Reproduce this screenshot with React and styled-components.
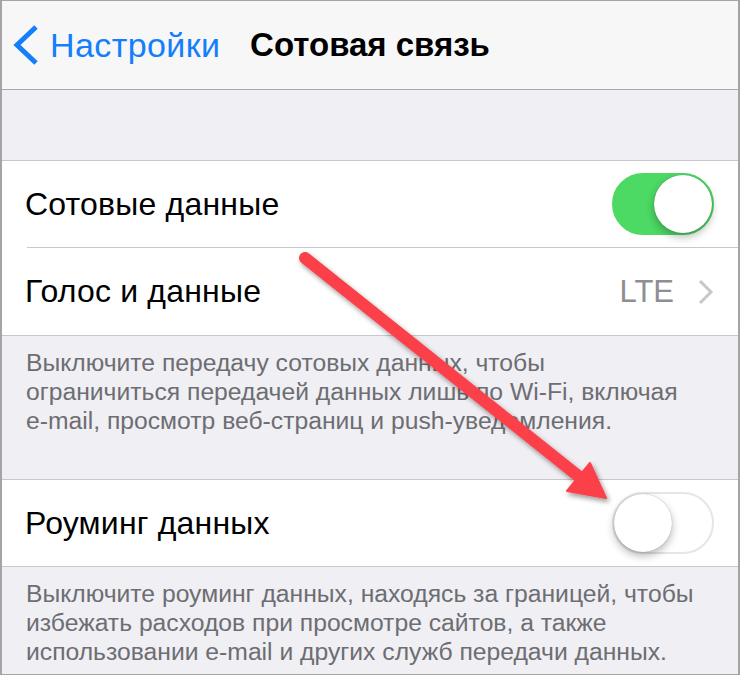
import React from "react";
import styled, { createGlobalStyle } from "styled-components";

const GlobalStyle = createGlobalStyle`
  html, body {
    margin: 0;
    padding: 0;
    background: #fff;
  }
  * {
    box-sizing: border-box;
  }
`;

const Frame = styled.div`
  position: relative;
  width: 740px;
  height: 675px;
  overflow: hidden;
  display: flex;
  flex-direction: column;
  background: #efeff4;
  border: 1px solid #a4a4a6;
  border-left-width: 2px;
  border-right-width: 2px;
  font-family: "Liberation Sans", Arial, sans-serif;
`;

const NavBar = styled.div`
  height: 89px;
  flex-shrink: 0;
  display: grid;
  grid-template-columns: 1fr auto 1fr;
  align-items: center;
  background: #f7f7f8;
  border-bottom: 1px solid #a9a9ad;
`;

const BackButton = styled.div`
  display: flex;
  align-items: center;
  gap: 10px;
  padding-left: 10px;
  color: #157efb;
  font-size: 34px;
  letter-spacing: 0.4px;
`;

const Title = styled.div`
  color: #000;
  font-size: 33px;
  font-weight: 700;
`;

const SectionGap = styled.div`
  height: 70px;
  flex-shrink: 0;
`;

const Group = styled.div`
  background: #fff;
  border-top: 1px solid #c8c7cc;
  border-bottom: 1px solid #c8c7cc;
  flex-shrink: 0;
`;

const Row = styled.div`
  height: ${(p) => p.$height || 87}px;
  display: flex;
  align-items: center;
  justify-content: space-between;
  padding: 0 24px 0 23px;
`;

const Separator = styled.div`
  height: 1px;
  margin-left: 25px;
  background: #c8c7cc;
`;

const Label = styled.div`
  color: #000;
  font-size: 32px;
  letter-spacing: 0.2px;
`;

const Detail = styled.div`
  display: flex;
  align-items: center;
  gap: 24px;
  color: #8e8e93;
  font-size: 31px;
`;

const Track = styled.div`
  position: relative;
  width: 102px;
  height: 62px;
  border-radius: 31px;
  background: ${(p) => (p.$on ? "#4cd964" : "#fff")};
  border: 2px solid ${(p) => (p.$on ? "#4cd964" : "#e5e5ea")};
  display: flex;
  align-items: center;
  justify-content: ${(p) => (p.$on ? "flex-end" : "flex-start")};
`;

const Knob = styled.div`
  width: 58px;
  height: 58px;
  border-radius: 50%;
  background: #fff;
  box-shadow: 0 4px 8px rgba(0, 0, 0, 0.28), 0 0 1px rgba(0, 0, 0, 0.35);
`;

const Footer = styled.div`
  padding: 12px 25px ${(p) => p.$bottom || 0}px 24px;
  color: #6d6d72;
  font-size: 24.7px;
  line-height: 29px;
  white-space: nowrap;
  flex-shrink: 0;
`;

const Overlay = styled.svg`
  position: absolute;
  left: 0;
  top: 0;
  pointer-events: none;
`;

function Switch({ on }) {
  return (
    <Track $on={on}>
      <Knob />
    </Track>
  );
}

function BackChevron() {
  return (
    <svg width="28" height="44" viewBox="0 0 28 44">
      <polyline
        points="24,4 5,22 24,40"
        fill="none"
        stroke="#157efb"
        strokeWidth="5"
      />
    </svg>
  );
}

function Chevron() {
  return (
    <svg width="16" height="26" viewBox="0 0 16 26">
      <polyline
        points="2,2 13,13 2,24"
        fill="none"
        stroke="#c7c7cc"
        strokeWidth="3"
      />
    </svg>
  );
}

function Arrow() {
  return (
    <Overlay width="740" height="675" viewBox="0 0 740 675">
      <defs>
        <filter id="arrowShadow" x="-20%" y="-20%" width="140%" height="140%">
          <feDropShadow dx="2" dy="3" stdDeviation="2.5" floodColor="#000" floodOpacity="0.4" />
        </filter>
      </defs>
      <g filter="url(#arrowShadow)" fill="#fc4048" stroke="#fc4048">
        <line x1="303" y1="257" x2="580" y2="478" strokeWidth="12" strokeLinecap="round" />
        <polygon points="604,497 565,490 588,462" strokeWidth="2" strokeLinejoin="round" />
      </g>
    </Overlay>
  );
}

export default function App() {
  return (
    <>
      <GlobalStyle />
      <Frame>
        <NavBar>
          <BackButton>
            <BackChevron />
            Настройки
          </BackButton>
          <Title>Сотовая связь</Title>
          <div />
        </NavBar>
        <SectionGap />
        <Group>
          <Row $height={86}>
            <Label>Сотовые данные</Label>
            <Switch on />
          </Row>
          <Separator />
          <Row>
            <Label>Голос и данные</Label>
            <Detail>
              LTE
              <Chevron />
            </Detail>
          </Row>
        </Group>
        <Footer $bottom={44}>
          Выключите передачу сотовых данных, чтобы
          <br />
          ограничиться передачей данных лишь по Wi-Fi, включая
          <br />
          e-mail, просмотр веб-страниц и push-уведомления.
        </Footer>
        <Group>
          <Row $height={86}>
            <Label>Роуминг данных</Label>
            <Switch on={false} />
          </Row>
        </Group>
        <Footer>
          Выключите роуминг данных, находясь за границей, чтобы
          <br />
          избежать расходов при просмотре сайтов, а также
          <br />
          использовании e-mail и других служб передачи данных.
        </Footer>
        <Arrow />
      </Frame>
    </>
  );
}
